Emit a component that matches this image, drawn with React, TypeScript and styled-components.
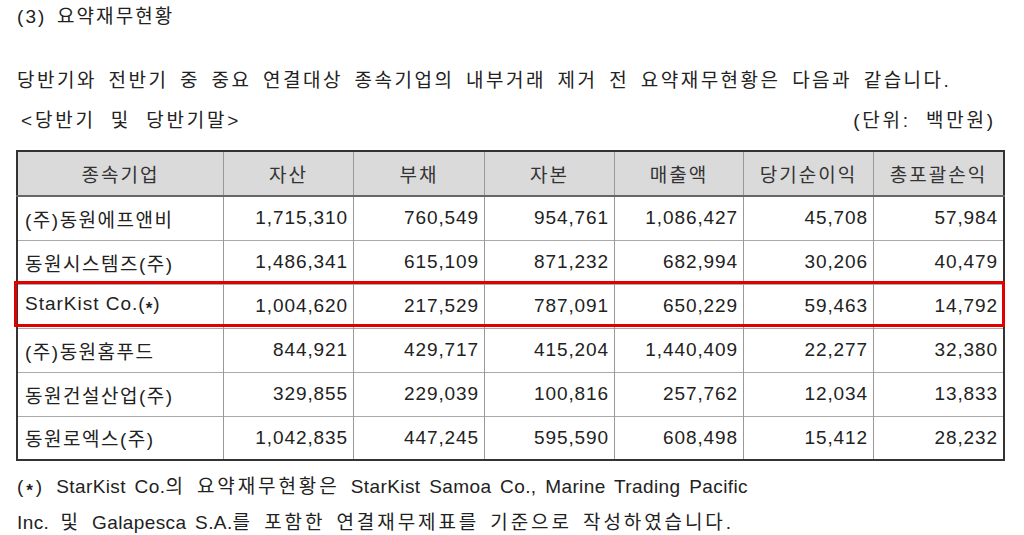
import React from 'react';
import styled, { createGlobalStyle } from 'styled-components';

const GlobalStyle = createGlobalStyle`
  html, body {
    margin: 0;
    padding: 0;
    background: #fff;
  }

  body {
    font-family: 'Liberation Sans', 'Noto Sans CJK KR', sans-serif;
    color: #222;
  }
`;

const Page = styled.div`
  width: 1024px;
  height: 535px;
  padding: 0 20px 0 16px;
  box-sizing: border-box;
  overflow: hidden;
`;

const Title = styled.h4`
  margin: 0 0 0 1px;
  font-weight: normal;
  font-size: 19px;
  line-height: 34px;
  letter-spacing: 2.1px;
  word-spacing: 3px;
`;

const Lead = styled.p`
  margin: 30px 0 0 1px;
  font-size: 19px;
  line-height: 34px;
  letter-spacing: 2.5px;
  word-spacing: 3.8px;
  white-space: nowrap;
`;

const Caption = styled.div`
  display: flex;
  justify-content: space-between;
  align-items: center;
  margin-top: 6px;
  padding: 0 8px 0 5px;
  font-size: 19px;
  line-height: 34px;
  letter-spacing: 2.8px;
  word-spacing: 7px;
`;

const TableWrap = styled.div`
  position: relative;
  margin-top: 12px;
  width: 988px;
`;

const Table = styled.table`
  width: 988px;
  border-collapse: collapse;
  table-layout: fixed;
  border: 2px solid #333;
  font-size: 19px;
`;

const Th = styled.th<{ $w: number }>`
  width: ${(p) => p.$w}px;
  height: 43px;
  padding: 0;
  background: #dadada;
  color: #333;
  font-weight: normal;
  letter-spacing: 2px;
  text-align: center;
  border-left: 1px solid #999;
  border-bottom: 2px solid #666;
`;

const Td = styled.td<{ $name?: boolean }>`
  height: 44px;
  padding: ${(p) => (p.$name ? '0 4px 0 7px' : '0 5px 0 4px')};
  text-align: ${(p) => (p.$name ? 'left' : 'right')};
  letter-spacing: ${(p) => (p.$name ? '1.5px' : '0.9px')};
  border-left: 1px solid #999;
  border-top: 1px solid #aaa;
  white-space: nowrap;
  box-sizing: border-box;
`;

const NameLatin = styled.span`
  letter-spacing: 1px;
`;

const Star = styled.span`
  display: inline-block;
  font-size: 0.9em;
  font-weight: bold;
  vertical-align: -0.2em;
`;

const Highlight = styled.div`
  position: absolute;
  left: -2px;
  right: -1px;
  top: 131px;
  height: 46px;
  border: 3px solid #e00000;
  box-sizing: border-box;
  pointer-events: none;
`;

const Notes = styled.div`
  margin: 10px 0 0 1px;
  font-size: 19px;
  line-height: 32px;
  letter-spacing: 2.9px;
  word-spacing: 3px;
  white-space: nowrap;
`;

const Latin = styled.span`
  letter-spacing: 0.4px;
`;

const columns = [
  { label: '종속기업', w: 205 },
  { label: '자산', w: 129 },
  { label: '부채', w: 130 },
  { label: '자본', w: 129 },
  { label: '매출액', w: 128 },
  { label: '당기순이익', w: 129 },
  { label: '총포괄손익', w: 129 },
];

const rows: [React.ReactNode, string[]][] = [
  ['(주)동원에프앤비', ['1,715,310', '760,549', '954,761', '1,086,427', '45,708', '57,984']],
  ['동원시스템즈(주)', ['1,486,341', '615,109', '871,232', '682,994', '30,206', '40,479']],
  [
    <NameLatin>
      StarKist Co.(<Star>*</Star>)
    </NameLatin>,
    ['1,004,620', '217,529', '787,091', '650,229', '59,463', '14,792'],
  ],
  ['(주)동원홈푸드', ['844,921', '429,717', '415,204', '1,440,409', '22,277', '32,380']],
  ['동원건설산업(주)', ['329,855', '229,039', '100,816', '257,762', '12,034', '13,833']],
  ['동원로엑스(주)', ['1,042,835', '447,245', '595,590', '608,498', '15,412', '28,232']],
];

const App = () => {
  return (
    <>
      <GlobalStyle />
      <Page>
        <Title>(3) 요약재무현황</Title>
        <Lead>
          당반기와 전반기 중 중요 연결대상 종속기업의 내부거래 제거 전 요약재무현황은 다음과 같습니다.
        </Lead>
        <Caption>
          <span>&lt;당반기 및 당반기말&gt;</span>
          <span>(단위: 백만원)</span>
        </Caption>
        <TableWrap>
          <Table>
            <thead>
              <tr>
                {columns.map((c) => (
                  <Th key={c.label} $w={c.w}>
                    {c.label}
                  </Th>
                ))}
              </tr>
            </thead>
            <tbody>
              {rows.map(([name, values], i) => (
                <tr key={i}>
                  <Td $name>{name}</Td>
                  {values.map((v, j) => (
                    <Td key={j}>{v}</Td>
                  ))}
                </tr>
              ))}
            </tbody>
          </Table>
          <Highlight />
        </TableWrap>
        <Notes>
          <div>
            (<Star>*</Star>) <Latin>StarKist Co.</Latin>의 요약재무현황은{' '}
            <Latin>StarKist Samoa Co., Marine Trading Pacific</Latin>
          </div>
          <div>
            <Latin>Inc.</Latin> 및 <Latin>Galapesca S.A.</Latin>를 포함한 연결재무제표를 기준으로 작성하였습니다.
          </div>
        </Notes>
      </Page>
    </>
  );
};

export default App;
